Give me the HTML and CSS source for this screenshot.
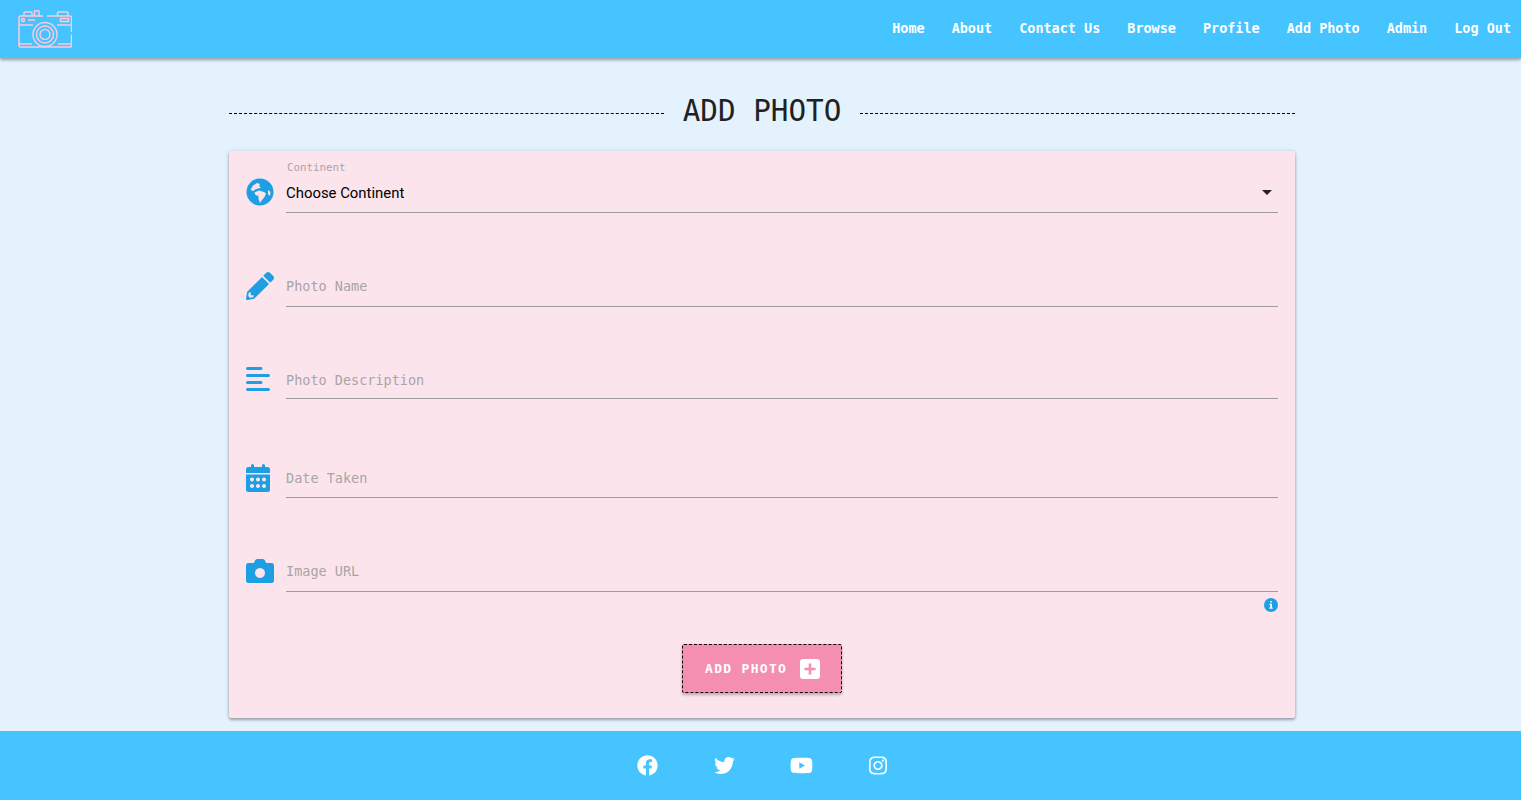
FILE: index.html
```html
<!DOCTYPE html>
<html lang="en">

<head>
  <meta charset="UTF-8">
  <meta name="viewport" content="width=device-width, initial-scale=1.0">
  <title>Add Photo</title>
  <link rel="stylesheet" href="styles.css">
</head>

<body>
  <header class="topbar">
    <a class="logo" href="#" aria-label="Home">
      <svg viewBox="0 0 54 38" width="54" height="38" fill="none" stroke="currentColor" stroke-width="1.500">
        <path d="M25 6H2.500Q1 6 1 7.500V35.500Q1 37 2.500 37H52Q53.500 37 53.500 35.500V24.500M53.500 22V7.500Q53.500 6 52 6H29"/>
        <path d="M6 6V3Q6 2 7 2H13Q14 2 14 3V6M16.500 6V1.500Q16.500 .7 17.500 .7H20Q21 .7 21 1.500V6M39.500 6V3Q39.500 2 40.500 2H49Q50 2 50 3V6"/>
        <path d="M1 15H15M39 15H53.500M1 34H14M40 34H53.500"/>
        <circle cx="5" cy="10" r="1.500"/>
        <path d="M10 10H17M42.500 8.500H50.500V11.500H42.500Z"/>
        <circle cx="27" cy="24.500" r="12"/>
        <circle cx="27" cy="24.500" r="8.500"/>
        <circle cx="27" cy="24.500" r="5"/>
      </svg>
    </a>
    <nav class="topnav">
      <a href="#">Home</a>
      <a href="#">About</a>
      <a href="#">Contact Us</a>
      <a href="#">Browse</a>
      <a href="#">Profile</a>
      <a href="#">Add Photo</a>
      <a href="#">Admin</a>
      <a href="#">Log Out</a>
    </nav>
  </header>

  <main class="content">
    <h1 class="page-title">ADD PHOTO</h1>

    <form class="card">
      <div class="row row-continent">
        <svg class="icon" viewBox="0 0 28 28" width="28" height="28">
          <circle cx="14" cy="14" r="13.500" fill="currentColor"/>
          <path class="land" d="M4.500 12L7 7.500 11 5 14 6 13 8 15 9.500 12 10.500 9 11.500 7.500 13Z"/>
          <path class="land" d="M8.500 14.500L13 12.500 18 14 20 15.500 18.500 19 16 22 14 25 12.500 21 12.500 18 9.500 17Z"/>
          <path class="land" d="M22 12L24.500 14 24 18 22 16Z"/>
        </svg>
        <div class="field field-select">
          <span class="field-label">Continent</span>
          <div class="select-line">
            <span class="select-value">Choose Continent</span>
            <span class="caret"></span>
          </div>
        </div>
      </div>

      <div class="row row-name">
        <svg class="icon" viewBox="0 0 512 512" width="28" height="28">
          <path fill="currentColor" d="M497.900 142.100l-46.100 46.100c-4.700 4.700-12.300 4.700-17 0l-111-111c-4.700-4.700-4.700-12.300 0-17l46.100-46.100c18.700-18.700 49.100-18.700 67.900 0l60.100 60.100c18.800 18.700 18.800 49.100 0 67.900zM284.200 99.800L21.600 362.400.4 483.900c-2.900 16.400 11.400 30.600 27.800 27.800l121.500-21.300 262.600-262.600c4.700-4.700 4.700-12.300 0-17l-111-111c-4.800-4.700-12.400-4.700-17.100 0zM88 424h48v36.300l-64.500 11.300-31.100-31.100L51.700 376H88v48z" fill-rule="evenodd"/>
        </svg>
        <div class="field"><span class="placeholder">Photo Name</span></div>
      </div>

      <div class="row row-desc">
        <svg class="icon" viewBox="0 0 24 24" width="24" height="24">
          <path fill="none" stroke="currentColor" stroke-width="3" stroke-linecap="round" d="M1.500 1.500H15M1.500 8.600H22.500M1.500 15.400H15M1.500 22.500H22.500"/>
        </svg>
        <div class="field"><span class="placeholder">Photo Description</span></div>
      </div>

      <div class="row row-date">
        <svg class="icon" viewBox="0 0 24 28" width="24" height="28">
          <path fill="currentColor" fill-rule="evenodd" d="M5 1.500a1.500 1.500 0 0 1 3 0V3H16V1.500a1.500 1.500 0 0 1 3 0V3H21.500A2.500 2.500 0 0 1 24 5.500V9H0V5.500A2.500 2.500 0 0 1 2.500 3H5ZM0 10.500H24V25.500A2.500 2.500 0 0 1 21.500 28H2.500A2.500 2.500 0 0 1 0 25.500ZM6 13.500a2 2 0 1 0 .01 0ZM12 13.500a2 2 0 1 0 .01 0ZM18 13.500a2 2 0 1 0 .01 0ZM6 20a2 2 0 1 0 .01 0ZM12 20a2 2 0 1 0 .01 0ZM18 20a2 2 0 1 0 .01 0Z"/>
        </svg>
        <div class="field"><span class="placeholder">Date Taken</span></div>
      </div>

      <div class="row row-url">
        <svg class="icon" viewBox="0 0 28 24" width="28" height="24">
          <path fill="currentColor" fill-rule="evenodd" d="M2.500 4H8L9 1.500Q9.600 0 11.200 0H16.800Q18.400 0 19 1.500L20 4H25.500A2.500 2.500 0 0 1 28 6.500V21.500A2.500 2.500 0 0 1 25.500 24H2.500A2.500 2.500 0 0 1 0 21.500V6.500A2.500 2.500 0 0 1 2.500 4ZM14 9A5 5 0 1 0 14.010 9Z"/>
        </svg>
        <div class="field"><span class="placeholder">Image URL</span></div>
      </div>

      <div class="hint">
        <svg viewBox="0 0 14 14" width="14" height="14">
          <circle cx="7" cy="7" r="7" fill="currentColor"/>
          <path fill="#fff" d="M6.200 3h1.600v1.500H6.200ZM5.500 5.800H7.900V9.500H8.700V10.800H5.400V9.500H6.200V7H5.500Z"/>
        </svg>
      </div>

      <div class="actions">
        <button class="btn" type="button">
          ADD PHOTO
          <svg viewBox="0 0 20 20" width="20" height="20">
            <rect width="20" height="20" rx="3" fill="#fff"/>
            <path d="M10 4.500V15.500M4.500 10H15.500" stroke="#f48fb1" stroke-width="2.600"/>
          </svg>
        </button>
      </div>
    </form>
  </main>

  <footer class="footer">
    <a href="#" aria-label="Facebook">
      <svg viewBox="0 0 512 512" width="21" height="21"><path fill="currentColor" d="M504 256C504 119 393 8 256 8S8 119 8 256c0 123.780 90.690 226.380 209.250 245V327.690h-63V256h63v-54.640c0-62.150 37-96.480 93.670-96.480 27.140 0 55.520 4.840 55.520 4.840v61h-31.280c-30.800 0-40.410 19.120-40.410 38.730V256h68.780l-11 71.690h-57.780V501C413.310 482.380 504 379.780 504 256z"/></svg>
    </a>
    <a href="#" aria-label="Twitter">
      <svg viewBox="0 0 512 512" width="21" height="21"><path fill="currentColor" d="M459.370 151.716c.325 4.548.325 9.097.325 13.645 0 138.720-105.583 298.558-298.558 298.558-59.452 0-114.680-17.219-161.137-47.106 8.447.974 16.568 1.299 25.340 1.299 49.055 0 94.213-16.568 130.274-44.832-46.132-.975-84.792-31.188-98.112-72.772 6.498.974 12.995 1.624 19.818 1.624 9.421 0 18.843-1.300 27.614-3.573-48.081-9.747-84.143-51.980-84.143-102.985v-1.299c13.969 7.797 30.214 12.670 47.431 13.319-28.264-18.843-46.781-51.005-46.781-87.391 0-19.492 5.197-37.360 14.294-52.954 51.655 63.675 129.300 105.258 216.365 109.807-1.624-7.797-2.599-15.918-2.599-24.040 0-57.828 46.782-104.934 104.934-104.934 30.213 0 57.502 12.670 76.670 33.137 23.715-4.548 46.456-13.320 66.599-25.340-7.798 24.366-24.366 44.833-46.132 57.827 21.117-2.273 41.584-8.122 60.426-16.243-14.292 20.791-32.161 39.308-52.628 54.253z"/></svg>
    </a>
    <a href="#" aria-label="YouTube">
      <svg viewBox="0 0 576 512" width="23" height="21"><path fill="currentColor" d="M549.655 124.083c-6.281-23.650-24.787-42.276-48.284-48.597C458.781 64 288 64 288 64S117.220 64 74.629 75.486c-23.497 6.322-42.003 24.947-48.284 48.597-11.412 42.867-11.412 132.305-11.412 132.305s0 89.438 11.412 132.305c6.281 23.650 24.787 41.500 48.284 47.821C117.220 448 288 448 288 448s170.780 0 213.371-11.486c23.497-6.321 42.003-24.171 48.284-47.821 11.412-42.867 11.412-132.305 11.412-132.305s0-89.438-11.412-132.305zm-317.510 213.508V175.185l142.739 81.205-142.739 81.201z"/></svg>
    </a>
    <a href="#" aria-label="Instagram">
      <svg viewBox="0 0 448 512" width="18" height="21"><path fill="currentColor" d="M224.100 141c-63.600 0-114.900 51.300-114.900 114.900s51.300 114.900 114.900 114.900S339 319.500 339 255.900 287.700 141 224.100 141zm0 189.600c-41.100 0-74.700-33.500-74.700-74.700s33.500-74.700 74.700-74.700 74.700 33.500 74.700 74.700-33.600 74.700-74.700 74.700zm146.400-194.300c0 14.900-12 26.800-26.800 26.800-14.900 0-26.800-12-26.800-26.800s12-26.800 26.800-26.800 26.800 12 26.800 26.800zm76.100 27.200c-1.700-35.900-9.900-67.700-36.200-93.900-26.200-26.200-58-34.400-93.900-36.200-37-2.100-147.900-2.100-184.900 0-35.800 1.700-67.600 9.900-93.900 36.100s-34.400 58-36.200 93.900c-2.100 37-2.100 147.900 0 184.900 1.700 35.900 9.900 67.700 36.200 93.900s58 34.400 93.900 36.200c37 2.100 147.900 2.100 184.900 0 35.900-1.700 67.700-9.900 93.900-36.200 26.200-26.200 34.400-58 36.200-93.900 2.100-37 2.100-147.800 0-184.800zM398.800 388c-7.800 19.600-22.900 34.700-42.600 42.600-29.500 11.700-99.500 9-132.100 9s-102.700 2.600-132.100-9c-19.600-7.800-34.700-22.900-42.600-42.600-11.700-29.500-9-99.500-9-132.100s-2.600-102.700 9-132.100c7.800-19.600 22.900-34.700 42.600-42.600 29.500-11.700 99.500-9 132.100-9s102.700-2.600 132.100 9c19.600 7.800 34.700 22.900 42.600 42.600 11.700 29.500 9 99.500 9 132.100s2.700 102.700-9 132.100z"/></svg>
    </a>
  </footer>
</body>

</html>
```

FILE: styles.css
```css
* {
  box-sizing: border-box;
}

body {
  margin: 0;
  block-size: 800px;
  display: flex;
  flex-direction: column;
  overflow: hidden;
  background-color: #e3f2fd;
  font-family: "DejaVu Sans Mono", "Liberation Mono", monospace;
}

a {
  color: inherit;
  text-decoration: none;
}

.topbar {
  flex: none;
  block-size: 58px;
  display: flex;
  align-items: center;
  justify-content: space-between;
  padding-inline: 18px 10px;
  background-color: #45c4ff;
  box-shadow: 0 2px 3px rgb(0 0 0 / 35%);
  position: relative;
}

.logo {
  display: flex;
  color: #fcc9de;
}

.topnav {
  display: flex;
  gap: 27px;
  color: #fff;
  font-size: 13.480px;
  font-weight: 700;
  margin-block-end: 2px;
}

.content {
  flex: 1;
  inline-size: 1069px;
  margin-inline: auto;
  padding-inline-start: 3px;
  padding-block-start: 35px;
}

.page-title {
  display: flex;
  align-items: center;
  gap: 19px;
  margin: 0 0 23px;
  block-size: 35px;
  font-size: 29.300px;
  font-weight: 400;
  color: #212121;

  &::before,
  &::after {
    content: "";
    flex: 1;
    border-block-start: 1px dashed #000;
    margin-block-start: 5px;
  }
}

.card {
  block-size: 567px;
  padding: 9px 17px 0;
  background-color: #fce4ec;
  border-radius: 2px;
  box-shadow: 0 2px 3px rgb(0 0 0 / 30%), 0 0 4px rgb(0 0 0 / 12%);
}

.row {
  display: flex;
  align-items: center;
  color: #1e9fe3;
}

.icon {
  flex: none;
  display: block;
  margin-inline-end: 12px;
}

.row-continent .icon {
  margin-block-start: 10px;
}

.row-name .icon {
  margin-block-start: -3px;
}

.row-url .icon {
  margin-block-start: -2px;
}

.land {
  fill: #fce4ec;
}

.field {
  flex: 1;
  display: flex;
  align-items: center;
  block-size: 40px;
  border-block-end: 1px solid #9e9e9e;
}

.row-desc .icon,
.row-date .icon {
  margin-inline-end: 16px;
}

.placeholder {
  font-size: 13.500px;
  color: #a8a5a6;
}

.row-name .placeholder,
.row-url .placeholder {
  margin-block-end: 2px;
}

.row-desc .placeholder {
  margin-block-start: 2px;
}

.field-select {
  display: block;
  block-size: 53px;
}

.field-label {
  display: block;
  font-size: 10.800px;
  line-height: 14px;
  color: #a8a5a6;
  padding-inline-start: 1px;
  margin-block-start: 1px;
}

.select-line {
  display: flex;
  align-items: center;
  justify-content: space-between;
  block-size: 35px;
  padding-inline-end: 6px;
}

.select-value {
  font-family: Roboto, "Liberation Sans", sans-serif;
  font-size: 14.900px;
  color: #000;
}

.caret {
  border-inline: 5px solid transparent;
  border-block-start: 5px solid #222;
}

.row-name {
  margin-block-start: 54px;
}

.row-desc {
  margin-block-start: 52px;
}

.row-date {
  margin-block-start: 59px;
}

.row-url {
  margin-block-start: 54px;
}

.hint {
  display: flex;
  justify-content: flex-end;
  margin-block-start: 6px;
  color: #1e9fe3;

  & svg {
    display: block;
  }
}

.actions {
  display: flex;
  justify-content: center;
  margin-block-start: 32px;
}

.btn {
  display: flex;
  align-items: center;
  gap: 13px;
  inline-size: 160px;
  block-size: 49px;
  padding: 0 0 0 22px;
  border: 1px dashed #000;
  border-radius: 2px;
  background-color: #f48fb1;
  color: #fff;
  font-family: inherit;
  font-size: 13px;
  font-weight: 700;
  letter-spacing: 1.300px;
  box-shadow: 0 2px 3px rgb(0 0 0 / 25%);
}

.footer {
  flex: none;
  block-size: 69px;
  display: flex;
  align-items: center;
  justify-content: center;
  padding-inline-start: 4px;
  background-color: #45c4ff;
  color: #fff;

  & a {
    inline-size: 77px;
    display: flex;
    justify-content: center;
  }
}
```
